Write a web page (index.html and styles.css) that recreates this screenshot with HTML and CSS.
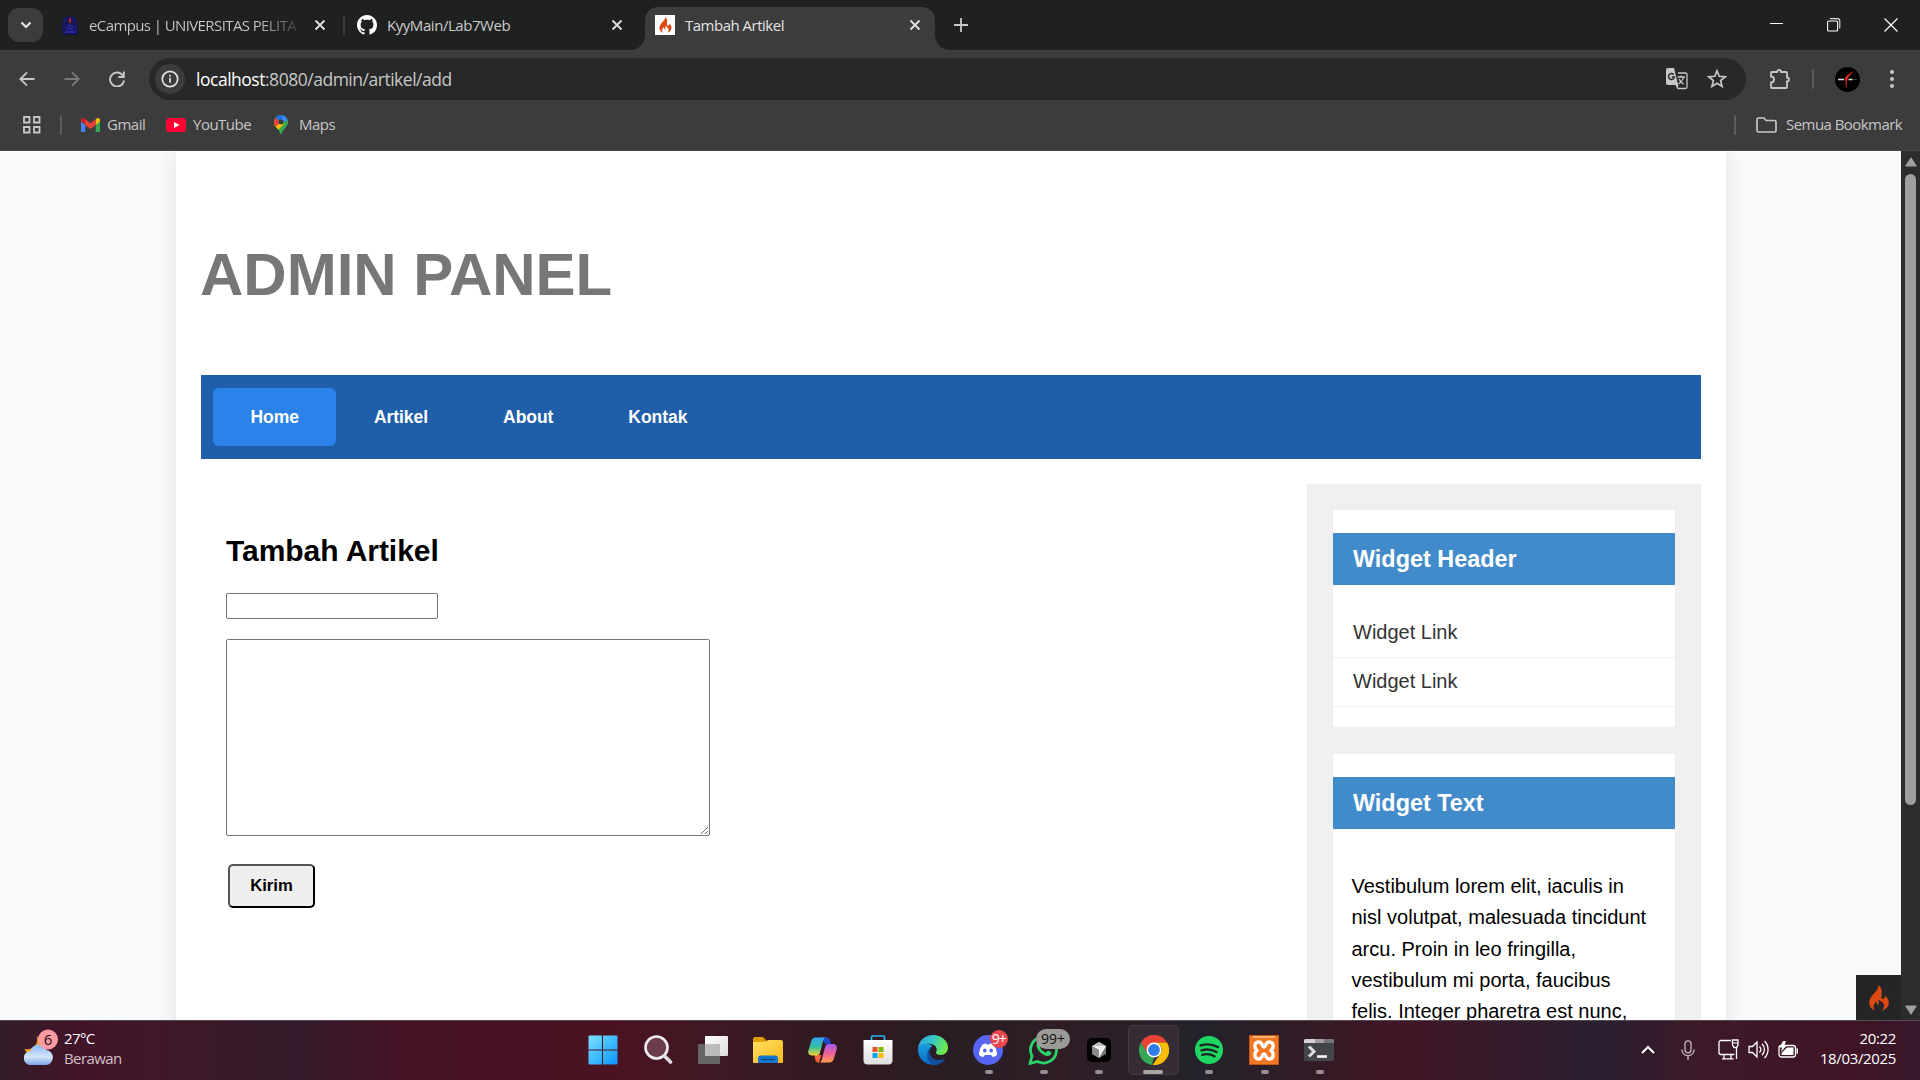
FILE: index.html
```html
<!DOCTYPE html>
<html lang="id">
<head>
<meta charset="utf-8">
<title>Tambah Artikel</title>
<link rel="stylesheet" href="styles.css">
</head>
<body>
<svg class="defs" width="0" height="0" aria-hidden="true">
  <symbol id="i-close" viewBox="0 0 12 12"><path d="M1.500 1.500l9 9M10.500 1.500l-9 9" fill="none" stroke="currentColor" stroke-width="1.900"/></symbol>
  <symbol id="i-flame" viewBox="0 0 20 26"><path d="M9 0C10.500 3.500 6.500 6.500 3.500 10C1 13 0 15.500 .3 18.500C.7 22 3 24.500 6 25.500C4.300 23.500 4 21 5.500 18.800C6 18 6.500 17.500 6.500 16.500C8.300 17.800 8.500 19.500 8.600 20.500C10.500 19.500 10 17 8.800 15C13 16 15.500 18.500 15 21.500C14.800 23.300 14 24.500 13 25.500C17 24.500 19.800 21.500 19.800 17.500C19.800 14.500 18.500 12.500 15.800 10.500C16.300 12 16 13.200 14.800 13.800C12.500 14.600 12 12.500 12.500 10C13.300 6 12.500 2 9 0Z" fill="currentColor"/></symbol>
</svg>

<header class="browser">
  <div class="tabstrip">
    <button class="tab-search"><svg width="12" height="8" viewBox="0 0 12 8"><path d="M1.500 1.500L6 6l4.500-4.500" fill="none" stroke="#e3e3e3" stroke-width="2.200"/></svg></button>
    <div class="tab tab-first">
      <svg width="18" height="20" viewBox="0 0 18 20"><path d="M1 20V9a8 8 0 0 1 16 0v11z" fill="#15154d"/><path d="M3 18V9a6 6 0 0 1 12 0v9" fill="none" stroke="#20207d" stroke-width="1.200"/><path d="M9 2l1.500 4-1.500 3-1.500-3z" fill="#b51f2b"/><path d="M5 11l4-2 4 2-1 3 2 4H4l2-4z" fill="#2929a5"/><path d="M6 12h6M6 15h6" stroke="#101042"/></svg>
      <span class="tab-title tab-fade">eCampus | UNIVERSITAS PELITA</span>
      <svg class="x" width="12" height="12"><use href="#i-close"/></svg>
    </div>
    <i class="tab-line"></i>
    <div class="tab tab-second">
      <svg width="20" height="20" viewBox="0 0 16 16"><path fill="#fff" d="M8 0C3.580 0 0 3.580 0 8c0 3.540 2.290 6.530 5.470 7.590.4.070.55-.17.55-.38 0-.19-.01-.82-.01-1.490-2.010.37-2.530-.49-2.690-.94-.09-.23-.48-.94-.82-1.130-.28-.15-.68-.52-.01-.53.63-.01 1.080.58 1.230.82.72 1.210 1.870.87 2.330.66.070-.52.28-.87.51-1.070-1.780-.2-3.640-.89-3.640-3.950 0-.87.31-1.590.82-2.150-.08-.2-.36-1.020.08-2.120 0 0 .67-.21 2.200.82.64-.18 1.320-.27 2-.27s1.360.09 2 .27c1.530-1.040 2.200-.82 2.200-.82.44 1.100.16 1.920.08 2.120.51.56.82 1.270.82 2.150 0 3.070-1.870 3.750-3.650 3.950.29.25.54.73.54 1.480 0 1.070-.01 1.930-.01 2.200 0 .21.15.46.55.38A8.010 8.010 0 0 0 16 8c0-4.420-3.580-8-8-8z"/></svg>
      <span class="tab-title t-git">KyyMain/Lab7Web</span>
      <svg class="x" width="12" height="12"><use href="#i-close"/></svg>
    </div>
    <div class="tab tab-active">
      <span class="fav"><svg width="13" height="16"><use href="#i-flame"/></svg></span>
      <span class="tab-title t-act">Tambah Artikel</span>
      <svg class="x" width="12" height="12"><use href="#i-close"/></svg>
    </div>
    <svg class="plus" width="14" height="14" viewBox="0 0 14 14"><path d="M7 0v14M0 7h14" stroke="#c9c9c9" stroke-width="1.800"/></svg>
    <div class="controls">
      <svg width="14" height="14" viewBox="0 0 14 14"><path d="M0 5.500h13" stroke="#fff"/></svg>
      <svg width="14" height="14" viewBox="0 0 14 14"><rect x=".6" y="3" width="10" height="10" rx="1" fill="none" stroke="#fff" stroke-width="1.100"/><path d="M3 .6h7.500a2.300 2.300 0 0 1 2.300 2.300V10.500" fill="none" stroke="#ddd" stroke-width="1.100"/></svg>
      <svg width="14" height="14" viewBox="0 0 14 14"><path d="M.5.5l13 13M13.500.5l-13 13" stroke="#fff" stroke-width="1.200"/></svg>
    </div>
  </div>

  <div class="toolbar">
    <svg class="back" width="16" height="16" viewBox="0 0 16 16"><path d="M15.500 8H1.500M8 1.300L1.300 8 8 14.700" fill="none" stroke="#c7c7c7" stroke-width="1.900"/></svg>
    <svg class="fwd" width="16" height="16" viewBox="0 0 16 16"><path d="M.5 8h14M8 1.300L14.700 8 8 14.700" fill="none" stroke="#7a7a7a" stroke-width="1.900"/></svg>
    <svg class="reload" width="16" height="16" viewBox="0 0 16 16"><path d="M13.800 4.500A7 7 0 1 0 15 9.500M14.800 .5V6H9.300" fill="none" stroke="#c7c7c7" stroke-width="1.900"/></svg>
    <div class="omnibox">
      <span class="info"><svg width="18" height="18" viewBox="0 0 18 18"><circle cx="9" cy="9" r="7.700" fill="none" stroke="#e3e3e3" stroke-width="1.700"/><path d="M9 7.800v5M9 4.800v1.800" stroke="#e3e3e3" stroke-width="1.700"/></svg></span>
      <span class="url"><b>localhost</b>:8080/admin/artikel/add</span>
      <svg class="translate" width="22" height="22" viewBox="0 0 22 22"><path d="M12 5h7.500A1.500 1.500 0 0 1 21 6.500v12.500a1.500 1.500 0 0 1-1.500 1.500H12l-2-4" fill="none" stroke="#c7c7c7" stroke-width="1.300"/><path d="M2 0h6l4.200 17H2a2 2 0 0 1-2-2V2a2 2 0 0 1 2-2z" fill="#c7c7c7"/><path d="M7.800 6.500A3 3 0 1 0 8.500 9H5.800" fill="none" stroke="#282828" stroke-width="1.400"/><path d="M11.500 9h7.500M15 7.500V9M17.500 9c-.5 3-3 5.500-5 7M13 11c1 2.500 3 4 4.500 5.200" fill="none" stroke="#c7c7c7" stroke-width="1.300"/><path d="M10 17h2.500l-1.500 3z" fill="#c7c7c7"/></svg>
      <svg class="star" width="20" height="20" viewBox="0 0 20 20"><path d="M10 1.800l2.200 5.500 6 .5-4.600 3.800 1.500 5.900L10 14.300l-5.100 3.200 1.500-5.900L1.800 7.800l6-.5z" fill="none" stroke="#c7c7c7" stroke-width="1.700"/></svg>
    </div>
    <svg class="ext" width="22" height="22" viewBox="0 0 22 22"><path d="M3.500 4h4.500a2 2 0 0 1 4 0h5a1 1 0 0 1 1 1v4.500a2 2 0 0 1 0 4V19a1 1 0 0 1-1 1H3a1 1 0 0 1-1-1v-4.500a3 3 0 0 0 0-6V5a1 1 0 0 1 1-1z" fill="none" stroke="#c7c7c7" stroke-width="1.800"/></svg>
    <i class="bar-line"></i>
    <svg class="avatar" width="25" height="25" viewBox="0 0 25 25"><circle cx="12.500" cy="12.500" r="12.500" fill="#000"/><path d="M19.500 4C14 6 9 10 9.500 14l1.500-1c-1 3-.5 6 .5 9C11.500 17 11.500 14 13 11c1.500-3 3.500-5 6.500-7z" fill="#e3261f"/><path d="M3 12.500h6M13.500 12.500h4" stroke="#ddd" stroke-width="1.500"/><path d="M18.500 12.500h4" stroke="#777" stroke-dasharray="1 1"/></svg>
    <svg class="dots" width="4" height="20" viewBox="0 0 4 20" fill="#c7c7c7"><circle cx="2" cy="3" r="2"/><circle cx="2" cy="10" r="2"/><circle cx="2" cy="17" r="2"/></svg>
  </div>

  <div class="bookmarks">
    <svg class="apps" width="18" height="18" viewBox="0 0 18 18" fill="none" stroke="#c7c7c7" stroke-width="1.800"><path d="M1 1h5.500v5.500H1zM11 1h5.500v5.500H11zM1 11h5.500v5.500H1zM11 11h5.500v5.500H11z"/></svg>
    <i class="bar-line"></i>
    <svg class="gmail" width="19" height="14" viewBox="0 0 19 14"><path d="M0 2.500v10A1.300 1.300 0 0 0 1.300 14H4.300V5z" fill="#4285f4"/><path d="M19 2.500v10a1.300 1.300 0 0 1-1.300 1.500h-3V5z" fill="#34a853"/><path d="M14.700 1.300V7L19 3.500V2C19 .2 17 -.6 15.600.5z" fill="#fbbc04"/><path d="M0 2C0 .2 2-.6 3.400.5l.9.8V7L0 3.500z" fill="#c5221f"/><path d="M4.300 1.300l5.200 4 5.200-4V7l-5.200 4-5.200-4z" fill="#ea4335"/></svg>
    <span class="b-gmail">Gmail</span>
    <svg class="yt" width="20" height="14" viewBox="0 0 20 14"><rect width="20" height="14" rx="3.500" fill="#ff0033"/><path d="M8 4l5.500 3L8 10z" fill="#fff"/></svg>
    <span class="b-yt">YouTube</span>
    <svg class="maps" width="14" height="20" viewBox="0 0 14 20"><defs><clipPath id="pin"><path d="M7 0a7 7 0 0 1 7 7c0 5-5 6.500-7 13C5 13.500 0 12 0 7a7 7 0 0 1 7-7z"/></clipPath></defs><g clip-path="url(#pin)"><path d="M0 0h14v20H0z" fill="#34a853"/><path d="M0 8L7 5l3 4-8 8-3-4z" fill="#fbbc04"/><path d="M-1 2l5 0 3 5-7 6z" fill="#ea4335"/><path d="M1.500 2.500L5 -1h10L7 8z" fill="#1a73e8"/><path d="M9-1l6 7-4 0-4 2z" fill="#4285f4"/></g><circle cx="7" cy="7" r="2.500" fill="#3c3c3c"/></svg>
    <span class="b-maps">Maps</span>
    <i class="bar-line last"></i>
    <svg class="folder" width="21" height="16" viewBox="0 0 21 16"><path d="M1 13.500v-11A1.500 1.500 0 0 1 2.500 1H8l2 2.500h8.500A1.500 1.500 0 0 1 20 5v8.500a1.500 1.500 0 0 1-1.500 1.500h-16A1.500 1.500 0 0 1 1 13.500z" fill="none" stroke="#c7c7c7" stroke-width="1.700"/></svg>
    <span class="b-all">Semua Bookmark</span>
  </div>
</header>

<div class="viewport">
  <div class="page">
    <div class="container">
      <h1>ADMIN PANEL</h1>
      <nav class="menu">
        <a class="active">Home</a><a>Artikel</a><a>About</a><a>Kontak</a>
      </nav>
      <div class="columns">
        <main class="form">
          <h2>Tambah Artikel</h2>
          <input type="text">
          <textarea></textarea>
          <button class="send">Kirim</button>
        </main>
        <aside class="sidebar">
          <section class="widget">
            <h3>Widget Header</h3>
            <ul><li>Widget Link</li><li>Widget Link</li></ul>
          </section>
          <section class="widget">
            <h3>Widget Text</h3>
            <p>Vestibulum lorem elit, iaculis in nisl volutpat, malesuada tincidunt arcu. Proin in leo fringilla, vestibulum mi porta, faucibus felis. Integer pharetra est nunc,</p>
          </section>
        </aside>
      </div>
    </div>
    <div class="debug"><svg width="20" height="26"><use href="#i-flame"/></svg></div>
  </div>
  <div class="scrollbar">
    <svg width="12" height="10" viewBox="0 0 12 10"><path d="M6 .8L11.300 9H.7z" fill="#9f9f9f" stroke="#9f9f9f" stroke-linejoin="round"/></svg>
    <div class="thumb"></div>
    <svg class="down" width="12" height="10" viewBox="0 0 12 10"><path d="M6 9.200L.7 1h10.600z" fill="#9f9f9f" stroke="#9f9f9f" stroke-linejoin="round"/></svg>
  </div>
</div>

<footer class="taskbar">
  <div class="weather">
    <svg width="35" height="37" viewBox="0 0 35 37"><defs><linearGradient id="cl" x1="0" y1="0" x2="0" y2="1"><stop offset="0" stop-color="#8fb9f2"/><stop offset=".6" stop-color="#d5e5fb"/><stop offset="1" stop-color="#7ba5ea"/></linearGradient></defs><path d="M12.500 7c3 8-4 15-12 13 1 3 4 6 9 6 8 0 12-12 3-19z" fill="#f5a019"/><path d="M7 36a7 7 0 0 1-.5-14 8.500 8.500 0 0 1 16-1A7.600 7.600 0 0 1 22.500 36z" fill="url(#cl)"/><circle cx="24" cy="10.500" r="10" fill="#ff9aa2"/></svg>
    <span class="count">6</span>
    <div class="temp"><span>27°C</span><span class="cond">Berawan</span></div>
  </div>

  <div class="apps-row">
    <div class="app"><svg width="30" height="30" viewBox="0 0 30 30"><defs><linearGradient id="win" x1="0" y1="0" x2="1" y2="1"><stop offset="0" stop-color="#7fe0ff"/><stop offset=".5" stop-color="#3fbcff"/><stop offset="1" stop-color="#0a95ff"/></linearGradient></defs><path d="M1.500.5H14v14H.5v-13a1 1 0 0 1 1-1zM15 .5h13.500a1 1 0 0 1 1 1v13H15zM.5 15.500H14v14H1.500a1 1 0 0 1-1-1zM15 15.500h14.500v13a1 1 0 0 1-1 1H15z" fill="url(#win)"/></svg></div>
    <div class="app"><svg width="30" height="30" viewBox="0 0 30 30"><circle cx="13.500" cy="12.500" r="11" fill="#6b3d4a" stroke="#f0eef0" stroke-width="2.600"/><path d="M21.500 21l6 6" stroke="#dcdce2" stroke-width="3.600" stroke-linecap="round"/></svg></div>
    <div class="app"><svg width="30" height="30" viewBox="0 0 30 30"><defs><linearGradient id="tv" x1="0" y1="0" x2="1" y2="1"><stop offset="0" stop-color="#fff"/><stop offset="1" stop-color="#ddd"/></linearGradient></defs><rect x="0" y="9" width="22" height="20" rx="1" fill="#666"/><rect x="7" y="1" width="23" height="20" rx="1" fill="url(#tv)"/><path d="M7 9h15v12H7z" fill="#bbb"/></svg></div>
    <div class="app"><svg width="30" height="30" viewBox="0 0 30 30"><defs><linearGradient id="fo" x1="0" y1="0" x2="1" y2="1"><stop offset="0" stop-color="#ffdf66"/><stop offset="1" stop-color="#fbb915"/></linearGradient></defs><path d="M0 10V4a2 2 0 0 1 2-2h8l3 3v5z" fill="#dd9c00"/><path d="M0 7l12-.3L15 5h13a2 2 0 0 1 2 2v20a1 1 0 0 1-1 1H1a1 1 0 0 1-1-1z" fill="url(#fo)"/><path d="M5 28v-5a2.500 2.500 0 0 1 2.500-2.500h15A2.500 2.500 0 0 1 25 23v5z" fill="#1479cc"/><path d="M9 24.500h12" stroke="#0b4a8a" stroke-width="1.400" stroke-linecap="round"/></svg></div>
    <div class="app"><svg width="30" height="30" viewBox="0 0 30 30"><defs><linearGradient id="c1" x1="0" y1="0" x2="0" y2="1"><stop offset="0" stop-color="#3ba4f5"/><stop offset=".5" stop-color="#2cc0a2"/><stop offset="1" stop-color="#f5d33c"/></linearGradient><linearGradient id="c2" x1="0" y1="0" x2="0" y2="1"><stop offset="0" stop-color="#a25cf0"/><stop offset=".5" stop-color="#ef5f99"/><stop offset="1" stop-color="#ff9c4d"/></linearGradient></defs><path d="M14 2.500h4.500c2 0 3 1 3.600 3L23 9h-6z" fill="#1c49ca"/><path d="M11 27.500c-3 0-3.500-2-4-4L6.500 20h7z" fill="#f6633d"/><path d="M7.500 2.500H18c-1.500 0-2.300 1-2.800 3L12 17.500c-.7 2.300-1.500 3-3.500 3H4c-3 0-4.500-2-3.500-5.500l2.800-9c.7-2.300 2-3.500 4.200-3.500z" fill="url(#c1)"/><path d="M21.500 27.500H11c1.500 0 2.300-1 2.800-3L17 12.500c.7-2.300 1.500-3.500 3.500-3.500H25c3 0 4.500 2.500 3.500 6l-2.800 9c-.7 2.300-2 3.500-4.200 3.500z" fill="url(#c2)"/></svg></div>
    <div class="app"><svg width="30" height="30" viewBox="0 0 30 30"><defs><linearGradient id="st" x1="0" y1="0" x2="0" y2="1"><stop offset="0" stop-color="#fff"/><stop offset="1" stop-color="#dedede"/></linearGradient></defs><path d="M8.500 6V2a1 1 0 0 1 1-1h11a1 1 0 0 1 1 1v4" fill="none" stroke="#25b5f3" stroke-width="1.700"/><path d="M.5 5h29v20a4 4 0 0 1-4 4.500h-21a4 4 0 0 1-4-4z" fill="url(#st)"/><path d="M9.500 12h5v5h-5z" fill="#f25022"/><path d="M15.500 12h5v5h-5z" fill="#7fba00"/><path d="M9.500 18h5v5h-5z" fill="#00a4ef"/><path d="M15.500 18h5v5h-5z" fill="#ffb900"/></svg></div>
    <div class="app"><svg width="30" height="30" viewBox="0 0 30 30"><defs><linearGradient id="e1" x1="0" y1="0" x2="1" y2=".3"><stop offset="0" stop-color="#2a9fe0"/><stop offset=".5" stop-color="#35c5cd"/><stop offset="1" stop-color="#6be84c"/></linearGradient><linearGradient id="e2" x1="0" y1="0" x2="0" y2="1"><stop offset="0" stop-color="#1ba0e0"/><stop offset="1" stop-color="#0a68c4"/></linearGradient></defs><path d="M0 14C.5 5.500 7 0 15 0s15 5.500 15 12.500c0 4.500-3 7.500-7.500 7.500-3.500 0-5-1.500-4.500-3 1.800-2.500.5-7-5-8C7 8 1.500 10 0 14z" fill="url(#e1)"/><path d="M0 14c1.500-4.500 6.500-6 10.500-5 2.500.5 4 2 4 2-5 2.500-5.500 14 6 18C9.500 32.500-.5 25 0 14z" fill="url(#e2)"/><path d="M13.500 12C9 17 13 25 21 25c3 0 5-.8 6.500-2-2 4-6 6.700-10 7C7 28.500 7.500 15 13.500 12z" fill="#114f9e"/></svg></div>
    <div class="app"><svg width="30" height="30" viewBox="0 0 30 30"><circle cx="15" cy="15" r="15" fill="#5865f2"/><path d="M9.500 9.500c1.500-.8 3-1 3.700-1l.5 1h2.600l.5-1c.8 0 2.200.3 3.700 1 2.500 3.500 3.600 7 3.500 10.500-1.500 1.200-3.200 1.900-4.500 2l-1.200-2h-6.600l-1.200 2c-1.300-.1-3-.8-4.500-2C6 16.500 7 13 9.500 9.500z" fill="#fff"/><ellipse cx="11.800" cy="15.500" rx="1.800" ry="2" fill="#5865f2"/><ellipse cx="18.200" cy="15.500" rx="1.800" ry="2" fill="#5865f2"/></svg><span class="badge red">9+</span><i class="run"></i></div>
    <div class="app"><svg width="31" height="31" viewBox="0 0 31 31"><path d="M2 29.500l2-7.500A13 13 0 1 1 9.500 27.500z" fill="none" stroke="#2bd266" stroke-width="2.800"/><path d="M9.500 8.500c1-1 2.500-1 3 .5l1 2.500-1.500 2c1.500 2.500 3 4 6 5l2-2 3.500 1.800c.5 2-2 4-4.500 3.700C14 21 8 15 8.500 11z" fill="#2bd266"/></svg><span class="badge grey">99+</span><i class="run"></i></div>
    <div class="app"><svg width="24" height="24" viewBox="0 0 24 24"><rect width="24" height="24" rx="5" fill="#000"/><path d="M12 4l7 4v8l-7 4-7-4V8z" fill="#777"/><path d="M12 4l7 4-7 4-7-4z" fill="#bbb"/><path d="M5 8h14l-7 12v-8z" fill="#eee"/><path d="M5 8l7 4v8l-7-4z" fill="#8a8a8a"/></svg><i class="run"></i></div>
    <div class="app current"><svg width="30" height="30" viewBox="0 0 30 30"><path d="M2 7.500A15 15 0 0 1 28 7.500H15L8.500 18.700z" fill="#ea4335"/><path d="M2 7.500l6.500 11.200A7.500 7.500 0 0 0 15 22.500L13 30A15 15 0 0 1 2 7.500z" fill="#34a853"/><path d="M28 7.500A15 15 0 0 1 13.500 30l8-11.300A7.500 7.500 0 0 0 21.500 11L15 7.500z" fill="#fbbc04"/><circle cx="15" cy="15" r="7.500" fill="#fff"/><circle cx="15" cy="15" r="5.900" fill="#2f7de9"/></svg><i class="run wide"></i></div>
    <div class="app"><svg width="28" height="28" viewBox="0 0 28 28"><circle cx="14" cy="14" r="14" fill="#1ed760"/><path d="M5.500 9.500c6-1.800 12.500-1.200 17.500 1.600M6.500 14.300c5-1.500 10.500-.9 15 1.700M7.300 18.800c4.200-1.200 8.500-.7 12.200 1.500" fill="none" stroke="#1d2624" stroke-width="2.400" stroke-linecap="round"/></svg><i class="run"></i></div>
    <div class="app"><svg width="30" height="30" viewBox="0 0 30 30"><rect width="30" height="30" rx="2" fill="#f37623"/><path d="M.5.5h29v29H.5z" fill="none" stroke="#c65a14"/><path d="M4 2h22" stroke="#ffb47a" stroke-width="2"/><path d="M15 12C12.800 12 13.800 7 9.800 7C5.500 7 4.500 12.500 8 15.500C4.500 18.500 5.500 24 9.800 24C13.800 24 12.800 19 15 19C17.200 19 16.200 24 20.200 24C24.500 24 25.500 18.500 22 15.500C25.500 12.500 24.500 7 20.200 7C16.200 7 17.200 12 15 12Z" fill="none" stroke="#fff" stroke-width="3.400" stroke-linejoin="round"/></svg><i class="run"></i></div>
    <div class="app"><svg width="30" height="22" viewBox="0 0 30 22"><rect width="30" height="22" rx="1.500" fill="#444548"/><path d="M0 4V1.500A1.500 1.500 0 0 1 1.500 0H11v4z" fill="#d7d0d5"/><path d="M11 0h9v4h-9z" fill="#a49da2"/><path d="M20 0h8.500A1.500 1.500 0 0 1 30 1.500V4H20z" fill="#787378"/><path d="M5 7.500l5 5-5 5" fill="none" stroke="#ddd" stroke-width="3"/><path d="M13 17.500h10" stroke="#f5f5f5" stroke-width="2.600"/></svg><i class="run"></i></div>
  </div>

  <div class="tray">
    <svg width="14" height="9" viewBox="0 0 14 9"><path d="M1 8l6-6 6 6" fill="none" stroke="#fff" stroke-width="2"/></svg>
    <svg class="mic" width="14" height="20" viewBox="0 0 14 20"><rect x="4" y=".8" width="6" height="12" rx="3" fill="none" stroke="#c9bec4" stroke-width="1.300"/><path d="M.8 9.500a6.200 6.200 0 0 0 12.400 0M7 16v4" fill="none" stroke="#c9bec4" stroke-width="1.300"/></svg>
    <svg class="net" width="21" height="21" viewBox="0 0 21 21"><path d="M13 1.500H3A2 2 0 0 0 1 3.500v10a2 2 0 0 0 2 2h12.500a2 2 0 0 0 1-.3M6 16v3.500M13 16v3.500M4 19.800h11.500M18.500 8v12" fill="none" stroke="#fff" stroke-width="1.300"/><path d="M14.500 1h5.500v5l-1.500 2.500h-2.500L14.500 6z" fill="none" stroke="#fff" stroke-width="1.300"/><path d="M14.500 4h5.500" stroke="#fff"/></svg>
    <svg class="vol" width="21" height="19" viewBox="0 0 21 19"><path d="M1 6.500v6h3.500l4.500 4.500V2L4.500 6.500z" fill="none" stroke="#fff" stroke-width="1.300"/><path d="M11.500 6.500a4.500 4.500 0 0 1 0 6M14 3.800a8 8 0 0 1 0 11.400M16.500 1a12 12 0 0 1 0 17" fill="none" stroke="#fff" stroke-width="1.300"/></svg>
    <svg class="bat" width="21" height="17" viewBox="0 0 21 17"><rect x="1" y="4.500" width="16.500" height="11.500" rx="2.500" fill="none" stroke="#fff" stroke-width="1.300"/><path d="M9 6.500h6.500V14H3.500v-2z" fill="#fff"/><path d="M18.500 7.500h1.500v5h-1.500z" fill="#fff"/><path d="M5 0h3L6.500 4H9L3 11l1-4.500H1.500z" fill="#fff"/></svg>
    <div class="clock"><span class="time">20:22</span><span class="date">18/03/2025</span></div>
  </div>
</footer>
</body>
</html>
```
FILE: styles.css
```css
* { box-sizing: border-box; }
body { margin: 0; width: 1920px; height: 1080px; overflow: hidden; display: flex; flex-direction: column; font-family: "Open Sans", "Noto Sans", sans-serif; }
svg { display: block; flex: none; }
.defs { position: absolute; }
h1, h2, h3, p, ul { margin: 0; padding: 0; }
span { white-space: nowrap; }

/* browser frame */
.browser { height: 151px; background: #3c3c3c; border-bottom: 1px solid #4a4848; flex: none; }
.tabstrip { height: 50px; background: #1f2120; display: flex; padding-left: 8px; position: relative; }
.tab-search { width: 35px; height: 34px; margin-top: 8px; border: 0; padding: 0; border-radius: 11px; background: #3c3c3c; display: flex; align-items: center; justify-content: center; }
.tab { display: flex; align-items: center; height: 50px; color: #c9c9c9; font-size: 15px; }
.tab .x { color: #dedede; margin-left: auto; }
.tab-title { margin-left: 10px; letter-spacing: -0.6px; }
.t-git { letter-spacing: -0.45px; }
.tab-first { width: 265px; margin-left: 18px; }
.tab-fade { width: 209px; overflow: hidden; color: transparent; background: linear-gradient(90deg, #c9c9c9 80%, #3a3a3a 100%); background-clip: text; -webkit-background-clip: text; }
.tab-line { width: 2px; height: 20px; margin: 15px 0 0 17px; background: #3c3c3c; }
.tab-second { width: 266px; margin-left: 12px; }
.tab-active { width: 290px; height: 43px; margin: 7px 0 0 22px; padding: 0 14px 8px 10px; border-radius: 13px 13px 0 0; background: #3c3c3c; color: #e3e3e3; position: relative; }
.tab-active::before, .tab-active::after { content: ""; position: absolute; bottom: 0; width: 14px; height: 14px; }
.tab-active::before { left: -14px; background: radial-gradient(circle at 0 0, transparent 13.5px, #3c3c3c 14px); }
.tab-active::after { right: -14px; background: radial-gradient(circle at 100% 0, transparent 13.5px, #3c3c3c 14px); }
.fav { width: 20px; height: 20px; background: #fff; color: #dd4814; display: flex; align-items: center; justify-content: center; }
.t-act { letter-spacing: -0.5px; }
.plus { margin: 18px 0 0 19px; }
.controls { display: flex; gap: 43px; margin: 18px 22px 0 auto; }
.toolbar { height: 58px; display: flex; align-items: center; padding: 0 26px 0 20px; }
.back { margin-left: -1px; }
.fwd { margin-left: 29px; }
.reload { margin-left: 29px; }
.omnibox { height: 42px; width: 1598px; margin-left: 24px; padding: 0 19px 0 6px; border-radius: 21px; background: #282828; display: flex; align-items: center; }
.info { width: 30px; height: 30px; border-radius: 50%; background: #3c3c3c; display: flex; align-items: center; justify-content: center; }
.url { margin-left: 11px; font-size: 17.5px; letter-spacing: -0.48px; color: #c7c7c7; }
.url b { font-weight: 400; color: #fff; }
.translate { margin-left: auto; }
.star { margin-left: 19px; }
.ext { margin-left: 23px; }
.bar-line { width: 2px; height: 20px; background: #5c5c5c; border-radius: 1px; }
.toolbar .bar-line { margin-left: 21px; }
.avatar { margin-left: 21px; }
.dots { margin-left: 30px; }
.bookmarks { height: 42px; padding: 0 18px 8px 23px; display: flex; align-items: center; color: #c7c7c7; font-size: 15px; letter-spacing: -0.5px; }
.bookmarks span { margin-top: -2px; }
.bookmarks .bar-line { margin-left: 19px; }
.gmail { margin-left: 19px; }
.b-gmail { width: 51px; margin-left: 7px; }
.yt { margin-left: 8px; }
.b-yt { width: 72px; margin-left: 7px; }
.maps { margin-left: 9px; }
.b-maps { margin-left: 11px; }
.bookmarks .last { margin-left: auto; }
.folder { margin-left: 20px; }
.b-all { margin-left: 9px; width: 116px; letter-spacing: -0.55px; }

/* site */
.viewport { height: 869px; display: flex; overflow: hidden; flex: none; }
.page { width: 1901px; background: #f8fafc; overflow: hidden; position: relative; font-family: "Liberation Sans", Arial, sans-serif; font-size: 20px; }
.container { width: 1550px; height: 1100px; margin-left: 176px; padding: 0 25px; background: #fff; box-shadow: 0 0 22px rgba(0, 0, 0, .1); }
h1 { height: 224px; padding-top: 94px; font-size: 60px; line-height: 60px; color: #777; text-indent: -1px; }
.menu { height: 84px; padding: 13px 12px; display: flex; background: #1f5faa; }
.menu a { height: 58px; line-height: 58px; padding: 0 37.5px; font-size: 17.5px; letter-spacing: -0.05px; font-weight: 700; color: #fff; }
.menu .active { background: #2b83ea; border-radius: 6px; }
.columns { display: flex; justify-content: space-between; margin-top: 25px; }
.form { padding: 52px 25px; display: flex; flex-direction: column; align-items: flex-start; }
h2 { font-size: 30px; line-height: 30px; color: #000; height: 57px; letter-spacing: -0.05px; }
input { width: 212px; height: 26px; border: 1px solid #767676; border-radius: 2px; padding: 0; }
textarea { width: 484px; height: 197px; margin: 20px 0 0; border: 1px solid #767676; border-radius: 2px; }
.send { width: 87px; height: 44px; margin: 28px 0 0 2px; padding: 0; border: 2px solid; border-color: #555 #000 #000 #555; border-radius: 5px; background: #efefef; color: #000; font: 700 16.67px "Liberation Sans", Arial, sans-serif; }
.sidebar { width: 394px; height: 800px; padding: 25px; background: #f0f0f0; display: flex; flex-direction: column; gap: 25px; }
.widget { border: 1px solid #eee; background: #fff; padding-top: 23px; }
h3 { height: 52px; padding-left: 20px; font-size: 23.4px; line-height: 52px; color: #fff; background: #428bca; }
.widget ul { list-style: none; padding: 24px 0 20px; }
.widget li { height: 49px; line-height: 46px; padding-left: 20px; border-bottom: 1px solid #eee; color: #333; }
.widget p { padding: 42px 20px 20px 18.5px; line-height: 31.25px; color: #000; }
.debug { position: absolute; right: 0; bottom: 0; width: 45px; height: 45px; background: #252525; color: #dd4814; display: flex; align-items: center; justify-content: center; }
.scrollbar { width: 19px; background: #2c2c2c; display: flex; flex-direction: column; align-items: center; padding: 6px 0 5px; }
.thumb { width: 11px; height: 631px; margin-top: 7px; border-radius: 6px; background: #9f9f9f; }
.down { margin-top: auto; }

/* taskbar */
.taskbar { height: 60px; flex: none; display: flex; align-items: center; position: relative; border-top: 1px solid #574a50; padding-bottom: 2px; background: linear-gradient(90deg, #321d2a 0, #431428 80px, #3c1929 190px, #341b2b 300px, #461327 400px, #4b1321 620px, #3c1a24 730px, #31191f 840px, #281e24 960px, #301d26 1060px, #23222a 1200px, #311c26 1300px, #411626 1400px, #291f30 1600px, #3b1a29 1690px, #401426 1850px, #36182a 1920px); color: #fff; font-size: 15px; }
.weather { display: flex; align-items: center; margin-left: 25px; position: relative; width: 552px; }
.weather > svg { margin-top: -5px; margin-left: -1px; }
.count { position: absolute; left: 13px; top: -2px; width: 20px; text-align: center; color: #111; line-height: 20px; }
.temp { display: flex; flex-direction: column; margin: -3px 0 0 5px; line-height: 20px; letter-spacing: -0.6px; }
.cond { color: #cfc0c7; }
.apps-row { display: flex; }
.app { width: 51px; height: 50px; margin-right: 4.14px; display: flex; align-items: center; justify-content: center; position: relative; border-radius: 5px; border: 1px solid transparent; }
.app.current { background: #362c35; border-color: #453a43; }
.run { position: absolute; bottom: 0; left: 21px; width: 8px; height: 4px; border-radius: 2px; background: #978d94; }
.run.wide { left: 14px; width: 20px; background: #aaa6a2; }
.badge { position: absolute; text-align: center; }
.red { left: 26px; top: 4px; width: 18px; height: 18px; line-height: 18px; border-radius: 9px; background: #e8484d; font-size: 14px; letter-spacing: -1px; }
.grey { left: 17px; top: 3px; width: 34px; height: 20px; line-height: 20px; border-radius: 10px; background: #9c9a97; color: #111; font-size: 14px; }
.tray { margin-left: auto; margin-right: 24px; display: flex; align-items: center; }
.mic { margin-left: 26px; }
.net { margin-left: 23px; }
.vol { margin-left: 9px; }
.bat { margin-left: 9px; }
.clock { margin-left: 18px; width: 79px; text-align: right; display: flex; flex-direction: column; align-items: flex-end; line-height: 20px; letter-spacing: -0.35px; margin-top: -3px; }
```
